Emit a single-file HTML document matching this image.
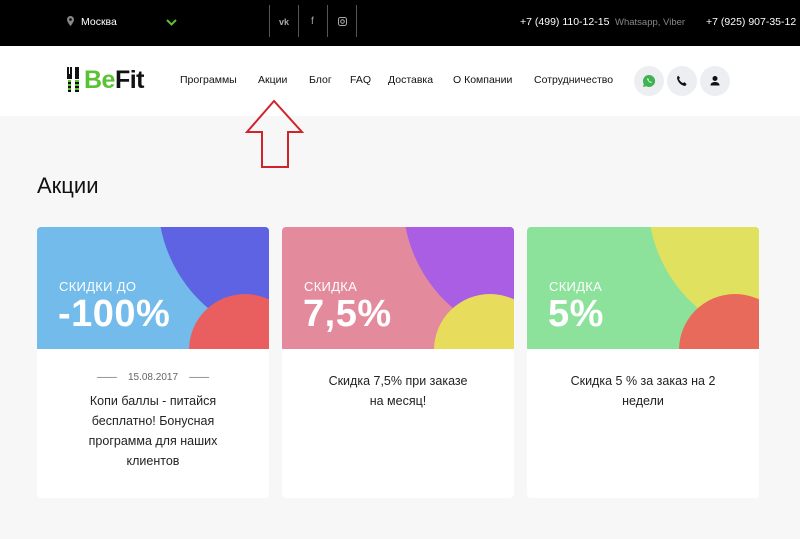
<!DOCTYPE html>
<html><head><meta charset="utf-8"><style>
*{margin:0;padding:0;box-sizing:border-box}
body{width:800px;height:539px;overflow:hidden;background:#f7f7f7;font-family:"Liberation Sans","DejaVu Sans",sans-serif;position:relative}
.top{position:absolute;left:0;top:0;width:800px;height:46px;background:#000;color:#fff;font-size:10.5px}
.top span{position:absolute;top:16px;white-space:nowrap}
.sep{position:absolute;top:5px;width:1px;height:32px;background:#555}
.hdr{position:absolute;left:0;top:46px;width:800px;height:70px;background:#fff}
.nav{position:absolute;top:28px;font-size:10.5px;color:#111;white-space:nowrap}
.ic{position:absolute;top:20px;width:30px;height:30px;border-radius:50%;background:#eceef2}
.ic svg{position:absolute;left:8px;top:8px}
h1{position:absolute;left:37px;top:173px;font-size:22px;font-weight:normal;color:#111}
.card{position:absolute;top:227px;width:232px;height:271px;background:#fff;border-radius:4px;overflow:hidden}
.ban{position:relative;height:122px;overflow:hidden}
.c{position:absolute;border-radius:50%}
.lbl{position:absolute;left:22px;top:52px;color:#fff;font-size:13px;letter-spacing:.3px}
.big{position:absolute;left:21px;top:66px;color:#fff;font-size:38px;font-weight:bold;letter-spacing:.5px}
.txt{text-align:center;font-size:12.5px;line-height:20px;color:#222;padding:0 42px}
</style></head><body>
<div class="top">
<svg style="position:absolute;left:67px;top:16px" width="7" height="10" viewBox="0 0 7 10"><path d="M3.5 0A3.5 3.5 0 0 0 0 3.5C0 6 3.5 10 3.5 10S7 6 7 3.5A3.5 3.5 0 0 0 3.5 0z" fill="#888"/><circle cx="3.5" cy="3.5" r="1.3" fill="#000"/></svg>
<span style="left:81px">Москва</span>
<svg style="position:absolute;left:166px;top:19px" width="11" height="7" viewBox="0 0 11 7"><path d="M1 1l4.5 4.5L10 1" stroke="#5bc236" stroke-width="2" fill="none"/></svg>
<div class="sep" style="left:269px"></div><div class="sep" style="left:298px"></div><div class="sep" style="left:327px"></div><div class="sep" style="left:356px"></div>
<span style="left:279px;font-size:9px;font-weight:bold;color:#aaa;top:17px">vk</span>
<span style="left:311px;font-size:10px;color:#aaa;top:16px">f</span>
<svg style="position:absolute;left:338px;top:17px" width="9" height="9" viewBox="0 0 9 9"><rect x=".5" y=".5" width="8" height="8" rx="2" fill="none" stroke="#aaa"/><circle cx="4.5" cy="4.5" r="1.8" fill="none" stroke="#aaa"/></svg>
<span style="left:520px">+7 (499) 110-12-15</span>
<span style="left:615px;color:#888;font-size:9.5px;top:17px">Whatsapp, Viber</span>
<span style="left:706px">+7 (925) 907-35-12</span>
</div>
<div class="hdr">
<svg style="position:absolute;left:67px;top:21px" width="13" height="26" viewBox="0 0 13 26"><rect x="0" y="0" width="2" height="8" fill="#111"/><rect x="3" y="0" width="2" height="8" fill="#111"/><rect x="0" y="7" width="5" height="5" fill="#111"/><rect x="8" y="0" width="4" height="12" fill="#111"/><g fill="#5bc236"><rect x="1" y="13" width="3" height="2"/><rect x="1" y="17" width="3" height="2"/><rect x="1" y="21" width="3" height="2"/><rect x="8" y="13" width="4" height="2"/><rect x="8" y="17" width="4" height="2"/><rect x="8" y="21" width="4" height="2"/></g><g fill="#111"><rect x="1" y="15" width="3" height="2"/><rect x="1" y="19" width="3" height="2"/><rect x="1" y="23" width="3" height="2"/><rect x="8" y="15" width="4" height="2"/><rect x="8" y="19" width="4" height="2"/><rect x="8" y="23" width="4" height="2"/></g></svg>
<div style="position:absolute;left:84px;top:20px;font-size:25px;font-weight:bold;letter-spacing:-.5px"><span style="color:#5bc236">Be</span><span style="color:#111">Fit</span></div>
<span class="nav" style="left:180px">Программы</span>
<span class="nav" style="left:258px">Акции</span>
<span class="nav" style="left:309px">Блог</span>
<span class="nav" style="left:350px">FAQ</span>
<span class="nav" style="left:388px">Доставка</span>
<span class="nav" style="left:453px">О Компании</span>
<span class="nav" style="left:534px">Сотрудничество</span>
<div class="ic" style="left:634px"><svg width="14" height="14" viewBox="0 0 14 14"><path d="M7 1a6 6 0 0 0-5.2 9L1 13l3.1-.8A6 6 0 1 0 7 1z" fill="#3fb34f"/><path d="M5 4.5c.3 1.8 1.8 3.7 4 4.5l.8-.9-1-.6-.5.4c-.8-.4-1.4-1-1.8-1.8l.4-.5-.6-1z" fill="#fff"/></svg></div>
<div class="ic" style="left:667px"><svg width="14" height="14" viewBox="0 0 14 14"><path d="M3 1.5l2 2.2-1 1.4c.9 1.8 2.2 3.1 4 4l1.4-1 2.2 2L10.3 12C6 11.5 2.5 8 2 3.7z" fill="#111"/></svg></div>
<div class="ic" style="left:700px"><svg width="14" height="14" viewBox="0 0 14 14"><circle cx="7" cy="4.5" r="2.5" fill="#111"/><path d="M2.5 11.5c0-2.5 2-3.5 4.5-3.5s4.5 1 4.5 3.5z" fill="#111"/></svg></div>
</div>
<svg style="position:absolute;left:240px;top:95px" width="70" height="80" viewBox="240 95 70 80"><path d="M274 101L247 132H262V167H288V132H302Z" fill="none" stroke="#d0242c" stroke-width="2"/></svg>
<h1>Акции</h1>
<div class="card" style="left:37px"><div class="ban" style="background:#72bbea">
<div class="c" style="left:121px;top:-169px;width:284px;height:284px;background:#5d63e3"></div>
<div class="c" style="left:152px;top:67px;width:112px;height:112px;background:#e95e5e"></div>
<div class="lbl">СКИДКИ ДО</div><div class="big">-100%</div></div>
<div style="text-align:center;font-size:10px;color:#666;margin-top:23px">—— &nbsp;&nbsp; 15.08.2017 &nbsp;&nbsp; ——</div>
<div class="txt" style="margin-top:8px;padding:0 38px">Копи баллы - питайся бесплатно! Бонусная программа для наших клиентов</div></div>
<div class="card" style="left:282px"><div class="ban" style="background:#e38a9d">
<div class="c" style="left:121px;top:-169px;width:284px;height:284px;background:#a95ee3"></div>
<div class="c" style="left:152px;top:67px;width:112px;height:112px;background:#e8dc5c"></div>
<div class="lbl">СКИДКА</div><div class="big">7,5%</div></div>
<div class="txt" style="margin-top:22px">Скидка 7,5% при заказе на месяц!</div></div>
<div class="card" style="left:527px"><div class="ban" style="background:#8ce29b">
<div class="c" style="left:121px;top:-169px;width:284px;height:284px;background:#e1e160"></div>
<div class="c" style="left:152px;top:67px;width:112px;height:112px;background:#e86a5a"></div>
<div class="lbl">СКИДКА</div><div class="big">5%</div></div>
<div class="txt" style="margin-top:22px">Скидка 5 % за заказ на 2 недели</div></div>
</body></html>
